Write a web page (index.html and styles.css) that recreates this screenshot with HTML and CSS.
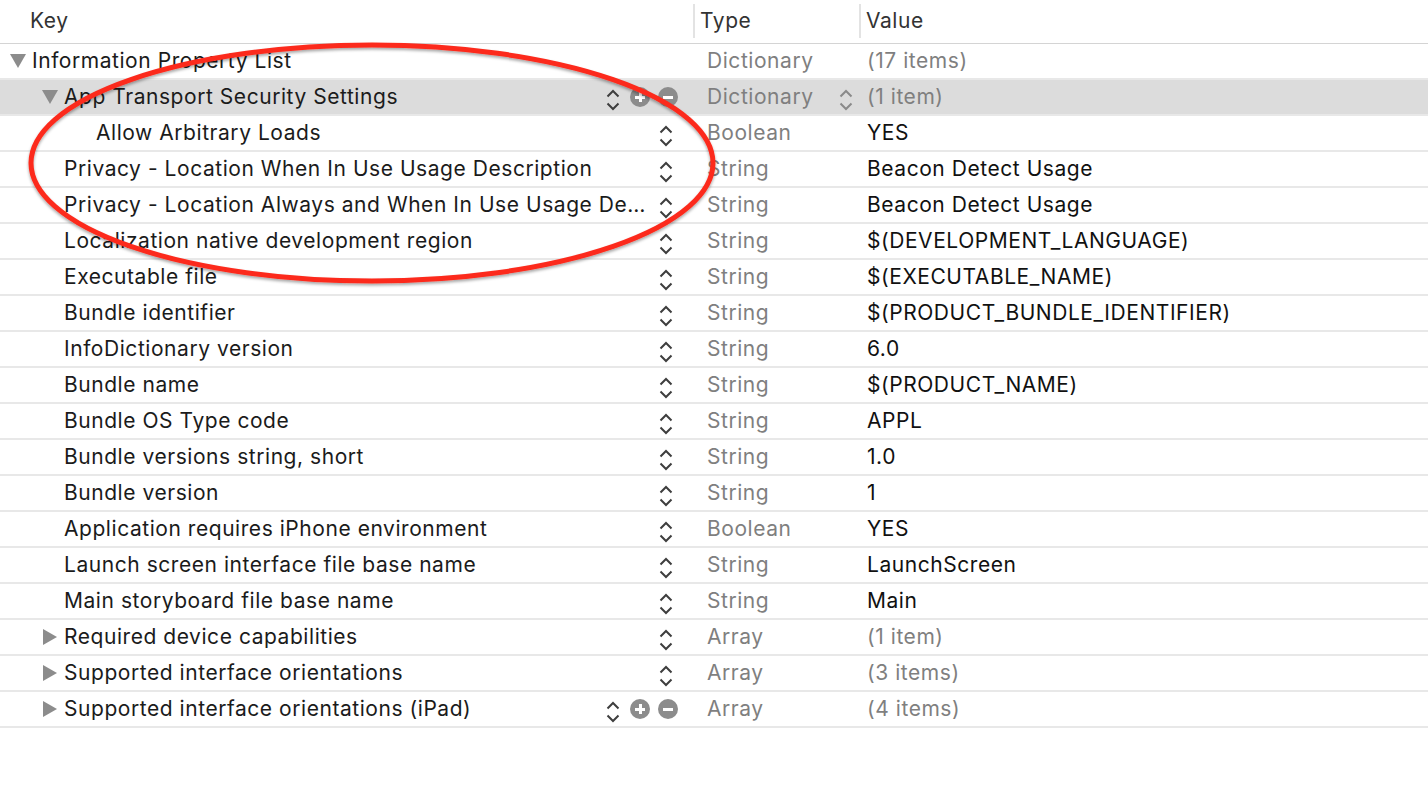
FILE: index.html
```html
<!DOCTYPE html>
<html>
<head>
<meta charset="utf-8">
<link rel="stylesheet" href="styles.css">
</head>
<body>
<div class="plist">
  <div class="hrow">
    <div class="hcell hkey">Key</div>
    <div class="hcell hsep">Type</div>
    <div class="hcell hsep">Value</div>
  </div>

  <div class="row">
    <div class="kcell l0"><span class="tri"><svg width="16" height="14" viewBox="0 0 16 14"><path d="M0 0H16L8 14Z" fill="#8c8c8c"/></svg></span><span class="ktext">Information Property List</span></div>
    <div class="tcell">Dictionary</div>
    <div class="vcell muted">(17 items)</div>
  </div>

  <div class="row sel">
    <div class="kcell l1"><span class="tri"><svg width="16" height="14" viewBox="0 0 16 14"><path d="M0 0H16L8 14Z" fill="#8c8c8c"/></svg></span><span class="ktext">App Transport Security Settings</span>
      <span class="ctrls wide"><svg class="step" width="14" height="22" viewBox="0 0 14 22"><path d="M1.5 7.5L7 2L12.5 7.5M1.5 14.5L7 20L12.5 14.5" fill="none" stroke="#3e3e3e" stroke-width="2"/></svg><span class="pm plus"></span><span class="pm minus"></span></span></div>
    <div class="tcell">Dictionary<svg class="step tstep" width="14" height="22" viewBox="0 0 14 22"><path d="M1.5 7.5L7 2L12.5 7.5M1.5 14.5L7 20L12.5 14.5" fill="none" stroke="#8a8a8a" stroke-width="2"/></svg></div>
    <div class="vcell muted">(1 item)</div>
  </div>

  <div class="row">
    <div class="kcell l2"><span class="tri"></span><span class="ktext">Allow Arbitrary Loads</span><span class="ctrls"><svg class="step" width="14" height="22" viewBox="0 0 14 22"><path d="M1.5 7.5L7 2L12.5 7.5M1.5 14.5L7 20L12.5 14.5" fill="none" stroke="#3e3e3e" stroke-width="2"/></svg></span></div>
    <div class="tcell">Boolean</div>
    <div class="vcell">YES</div>
  </div>

  <div class="row">
    <div class="kcell l1"><span class="tri"></span><span class="ktext">Privacy - Location When In Use Usage Description</span><span class="ctrls"><svg class="step" width="14" height="22" viewBox="0 0 14 22"><path d="M1.5 7.5L7 2L12.5 7.5M1.5 14.5L7 20L12.5 14.5" fill="none" stroke="#3e3e3e" stroke-width="2"/></svg></span></div>
    <div class="tcell">String</div>
    <div class="vcell">Beacon Detect Usage</div>
  </div>

  <div class="row">
    <div class="kcell l1"><span class="tri"></span><span class="ktext">Privacy - Location Always and When In Use Usage Description</span><span class="ctrls"><svg class="step" width="14" height="22" viewBox="0 0 14 22"><path d="M1.5 7.5L7 2L12.5 7.5M1.5 14.5L7 20L12.5 14.5" fill="none" stroke="#3e3e3e" stroke-width="2"/></svg></span></div>
    <div class="tcell">String</div>
    <div class="vcell">Beacon Detect Usage</div>
  </div>

  <div class="row">
    <div class="kcell l1"><span class="tri"></span><span class="ktext">Localization native development region</span><span class="ctrls"><svg class="step" width="14" height="22" viewBox="0 0 14 22"><path d="M1.5 7.5L7 2L12.5 7.5M1.5 14.5L7 20L12.5 14.5" fill="none" stroke="#3e3e3e" stroke-width="2"/></svg></span></div>
    <div class="tcell">String</div>
    <div class="vcell">$(DEVELOPMENT_LANGUAGE)</div>
  </div>

  <div class="row">
    <div class="kcell l1"><span class="tri"></span><span class="ktext">Executable file</span><span class="ctrls"><svg class="step" width="14" height="22" viewBox="0 0 14 22"><path d="M1.5 7.5L7 2L12.5 7.5M1.5 14.5L7 20L12.5 14.5" fill="none" stroke="#3e3e3e" stroke-width="2"/></svg></span></div>
    <div class="tcell">String</div>
    <div class="vcell">$(EXECUTABLE_NAME)</div>
  </div>

  <div class="row">
    <div class="kcell l1"><span class="tri"></span><span class="ktext">Bundle identifier</span><span class="ctrls"><svg class="step" width="14" height="22" viewBox="0 0 14 22"><path d="M1.5 7.5L7 2L12.5 7.5M1.5 14.5L7 20L12.5 14.5" fill="none" stroke="#3e3e3e" stroke-width="2"/></svg></span></div>
    <div class="tcell">String</div>
    <div class="vcell">$(PRODUCT_BUNDLE_IDENTIFIER)</div>
  </div>

  <div class="row">
    <div class="kcell l1"><span class="tri"></span><span class="ktext">InfoDictionary version</span><span class="ctrls"><svg class="step" width="14" height="22" viewBox="0 0 14 22"><path d="M1.5 7.5L7 2L12.5 7.5M1.5 14.5L7 20L12.5 14.5" fill="none" stroke="#3e3e3e" stroke-width="2"/></svg></span></div>
    <div class="tcell">String</div>
    <div class="vcell">6.0</div>
  </div>

  <div class="row">
    <div class="kcell l1"><span class="tri"></span><span class="ktext">Bundle name</span><span class="ctrls"><svg class="step" width="14" height="22" viewBox="0 0 14 22"><path d="M1.5 7.5L7 2L12.5 7.5M1.5 14.5L7 20L12.5 14.5" fill="none" stroke="#3e3e3e" stroke-width="2"/></svg></span></div>
    <div class="tcell">String</div>
    <div class="vcell">$(PRODUCT_NAME)</div>
  </div>

  <div class="row">
    <div class="kcell l1"><span class="tri"></span><span class="ktext">Bundle OS Type code</span><span class="ctrls"><svg class="step" width="14" height="22" viewBox="0 0 14 22"><path d="M1.5 7.5L7 2L12.5 7.5M1.5 14.5L7 20L12.5 14.5" fill="none" stroke="#3e3e3e" stroke-width="2"/></svg></span></div>
    <div class="tcell">String</div>
    <div class="vcell">APPL</div>
  </div>

  <div class="row">
    <div class="kcell l1"><span class="tri"></span><span class="ktext">Bundle versions string, short</span><span class="ctrls"><svg class="step" width="14" height="22" viewBox="0 0 14 22"><path d="M1.5 7.5L7 2L12.5 7.5M1.5 14.5L7 20L12.5 14.5" fill="none" stroke="#3e3e3e" stroke-width="2"/></svg></span></div>
    <div class="tcell">String</div>
    <div class="vcell">1.0</div>
  </div>

  <div class="row">
    <div class="kcell l1"><span class="tri"></span><span class="ktext">Bundle version</span><span class="ctrls"><svg class="step" width="14" height="22" viewBox="0 0 14 22"><path d="M1.5 7.5L7 2L12.5 7.5M1.5 14.5L7 20L12.5 14.5" fill="none" stroke="#3e3e3e" stroke-width="2"/></svg></span></div>
    <div class="tcell">String</div>
    <div class="vcell">1</div>
  </div>

  <div class="row">
    <div class="kcell l1"><span class="tri"></span><span class="ktext">Application requires iPhone environment</span><span class="ctrls"><svg class="step" width="14" height="22" viewBox="0 0 14 22"><path d="M1.5 7.5L7 2L12.5 7.5M1.5 14.5L7 20L12.5 14.5" fill="none" stroke="#3e3e3e" stroke-width="2"/></svg></span></div>
    <div class="tcell">Boolean</div>
    <div class="vcell">YES</div>
  </div>

  <div class="row">
    <div class="kcell l1"><span class="tri"></span><span class="ktext">Launch screen interface file base name</span><span class="ctrls"><svg class="step" width="14" height="22" viewBox="0 0 14 22"><path d="M1.5 7.5L7 2L12.5 7.5M1.5 14.5L7 20L12.5 14.5" fill="none" stroke="#3e3e3e" stroke-width="2"/></svg></span></div>
    <div class="tcell">String</div>
    <div class="vcell">LaunchScreen</div>
  </div>

  <div class="row">
    <div class="kcell l1"><span class="tri"></span><span class="ktext">Main storyboard file base name</span><span class="ctrls"><svg class="step" width="14" height="22" viewBox="0 0 14 22"><path d="M1.5 7.5L7 2L12.5 7.5M1.5 14.5L7 20L12.5 14.5" fill="none" stroke="#3e3e3e" stroke-width="2"/></svg></span></div>
    <div class="tcell">String</div>
    <div class="vcell">Main</div>
  </div>

  <div class="row">
    <div class="kcell l1"><span class="tri"><svg width="14" height="16" viewBox="0 0 14 16"><path d="M0 0V16L14 8Z" fill="#8c8c8c"/></svg></span><span class="ktext">Required device capabilities</span><span class="ctrls"><svg class="step" width="14" height="22" viewBox="0 0 14 22"><path d="M1.5 7.5L7 2L12.5 7.5M1.5 14.5L7 20L12.5 14.5" fill="none" stroke="#3e3e3e" stroke-width="2"/></svg></span></div>
    <div class="tcell">Array</div>
    <div class="vcell muted">(1 item)</div>
  </div>

  <div class="row">
    <div class="kcell l1"><span class="tri"><svg width="14" height="16" viewBox="0 0 14 16"><path d="M0 0V16L14 8Z" fill="#8c8c8c"/></svg></span><span class="ktext">Supported interface orientations</span><span class="ctrls"><svg class="step" width="14" height="22" viewBox="0 0 14 22"><path d="M1.5 7.5L7 2L12.5 7.5M1.5 14.5L7 20L12.5 14.5" fill="none" stroke="#3e3e3e" stroke-width="2"/></svg></span></div>
    <div class="tcell">Array</div>
    <div class="vcell muted">(3 items)</div>
  </div>

  <div class="row">
    <div class="kcell l1"><span class="tri"><svg width="14" height="16" viewBox="0 0 14 16"><path d="M0 0V16L14 8Z" fill="#8c8c8c"/></svg></span><span class="ktext">Supported interface orientations (iPad)</span>
      <span class="ctrls wide"><svg class="step" width="14" height="22" viewBox="0 0 14 22"><path d="M1.5 7.5L7 2L12.5 7.5M1.5 14.5L7 20L12.5 14.5" fill="none" stroke="#3e3e3e" stroke-width="2"/></svg><span class="pm plus"></span><span class="pm minus"></span></span></div>
    <div class="tcell">Array</div>
    <div class="vcell muted">(4 items)</div>
  </div>
</div>

<svg class="annot" width="1428" height="794" viewBox="0 0 1428 794">
  <defs>
    <filter id="sh" x="-10%" y="-10%" width="120%" height="130%">
      <feDropShadow dx="0" dy="2" stdDeviation="1.5" flood-color="#000" flood-opacity="0.35"/>
    </filter>
  </defs>
  <ellipse cx="372" cy="163" rx="341" ry="118" fill="none" stroke="#fc2a1c" stroke-width="5" filter="url(#sh)"/>
</svg>
</body>
</html>
```

FILE: styles.css
```css
html, body {
  margin: 0;
  padding: 0;
  background: #ffffff;
}
body {
  font-family: "Inter", "Liberation Sans", sans-serif;
  font-size: 21px;
  letter-spacing: 0.55px;
  color: #1b1b1b;
  width: 1428px;
  height: 794px;
  overflow: hidden;
  position: relative;
}
.plist {
  width: 1428px;
}
.hrow {
  display: grid;
  grid-template-columns: 693px 166px 1fr;
  height: 43px;
  border-bottom: 1px solid #d4d4d4;
  align-items: center;
}
.hcell {
  color: #333333;
  display: flex;
  align-items: center;
}
.hkey {
  padding-left: 30px;
  height: 43px;
  margin-top: -2px;
}
.hsep {
  height: 34px;
  border-left: 2px solid #e3e3e3;
  padding-left: 5px;
  margin-top: -2px;
}
.row {
  display: grid;
  grid-template-columns: 694px 166px 1fr;
  height: 34px;
  border-bottom: 2px solid #e8e8e8;
  align-items: center;
}
.row.sel {
  background: #dcdcdc;
}
.kcell {
  display: flex;
  align-items: center;
  min-width: 0;
  height: 34px;
  padding-left: 10px;
}
.l0 { padding-left: 10px; }
.l1 { padding-left: 42px; }
.l2 { padding-left: 74px; }
.tri {
  width: 22px;
  flex: none;
  display: flex;
  align-items: center;
}
.l1 .tri svg[width="14"] { margin-left: 1px; }
.ktext {
  flex: 1;
  min-width: 0;
  white-space: nowrap;
  overflow: hidden;
  text-overflow: ellipsis;
  color: #1b1b1b;
  padding-bottom: 2px;
}
.ctrls {
  flex: none;
  display: flex;
  align-items: center;
  margin-right: 21px;
  margin-left: 6px;
}
.ctrls.wide {
  margin-right: 16px;
}
.step {
  display: block;
  margin-top: 5px;
}
.pm {
  width: 20px;
  height: 20px;
  border-radius: 50%;
  background: #8c8c8c;
  position: relative;
  flex: none;
}
.plus { margin-left: 10px; }
.minus { margin-left: 8px; }
.pm::before {
  content: "";
  position: absolute;
  left: 5px;
  top: 8.5px;
  width: 10px;
  height: 3px;
  background: #ffffff;
}
.plus::after {
  content: "";
  position: absolute;
  left: 8.5px;
  top: 5px;
  width: 3px;
  height: 10px;
  background: #ffffff;
}
.tcell {
  display: flex;
  align-items: center;
  height: 32px;
  padding-left: 13px;
  padding-bottom: 2px;
  color: #7f7f7f;
}
.tstep {
  margin-left: auto;
  margin-right: 7px;
  margin-top: 7px;
}
.vcell {
  display: flex;
  align-items: center;
  height: 32px;
  padding-left: 7px;
  padding-bottom: 2px;
  color: #111111;
}
.vcell.muted {
  color: #7f7f7f;
}
.annot {
  position: absolute;
  left: 0;
  top: 0;
  pointer-events: none;
}
```
